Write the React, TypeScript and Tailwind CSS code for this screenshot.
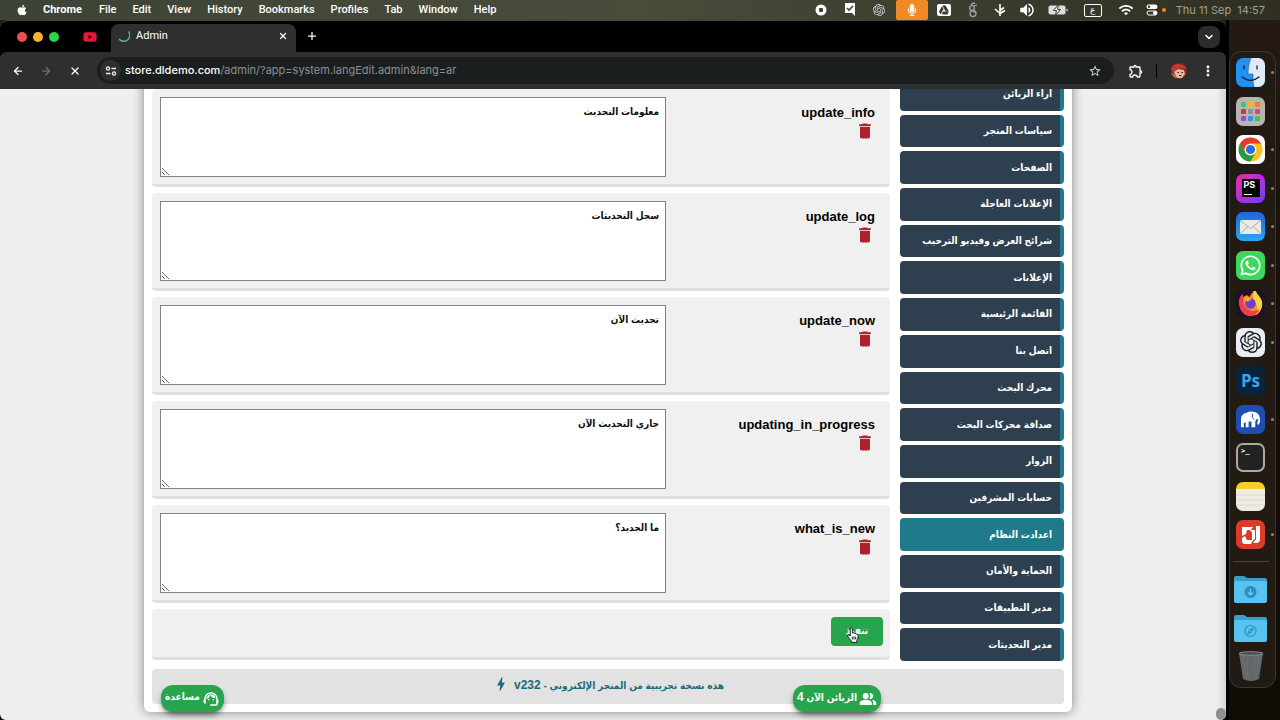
import { useState } from "react";
import type { ReactNode } from "react";
import { FaApple, FaYoutube, FaWhatsapp, FaMicrophone } from "react-icons/fa";
import { SiOpenai, SiGoogledrive } from "react-icons/si";
import {
  MdDelete,
  MdBolt,
  MdPeopleAlt,
  MdSupportAgent,
  MdWifi,
  MdVolumeUp,
  MdOutlineExtension,
  MdStarBorder,
} from "react-icons/md";
import {
  ArrowLeft,
  ArrowRight,
  ChevronDown,
  EllipsisVertical,
  Plus,
  X,
} from "lucide-react";

const menus = [
  "File",
  "Edit",
  "View",
  "History",
  "Bookmarks",
  "Profiles",
  "Tab",
  "Window",
  "Help",
];

const sections = [
  "اراء الزبائن",
  "سياسات المتجر",
  "الصفحات",
  "الإعلانات العاجلة",
  "شرائح العرض وفيديو الترحيب",
  "الإعلانات",
  "القائمة الرئيسية",
  "اتصل بنا",
  "محرك البحث",
  "صداقة محركات البحث",
  "الزوار",
  "حسابات المشرفين",
  "اعدادت النظام",
  "الحماية والأمان",
  "مدير التطبيقات",
  "مدير التحديثات",
];

const initialStrings = [
  { key: "update_info", value: "معلومات التحديث" },
  { key: "update_log", value: "سجل التحديثات" },
  { key: "update_now", value: "تحديث الآن" },
  { key: "updating_in_progress", value: "جاري التحديث الآن" },
  { key: "what_is_new", value: "ما الجديد؟" },
];

const MenuBar = () => (
  <header className="flex h-5 shrink-0 items-center bg-linear-to-r from-[#3c4437] via-[#4a4c3a] to-[#2f2f22] pr-[15px] pl-4 text-[11px] text-white">
    <FaApple className="mr-[15px] size-3" />
    <nav className="flex items-center gap-4 font-[Roboto,sans-serif] font-medium">
      <button className="pr-px font-bold">Chrome</button>
      {menus.map((menu) => (
        <button key={menu}>{menu}</button>
      ))}
    </nav>
    <div className="ml-auto flex items-center">
      <svg className="size-3" viewBox="0 0 12 12">
        <circle cx="6" cy="6" r="5.5" fill="#fff" />
        <rect x="4" y="4" width="4" height="4" rx="1" fill="#3f4234" />
      </svg>
      <svg className="ml-4 size-3.5" viewBox="0 0 14 14">
        <path d="M2 0h10v13l-3-3H2z" fill="#fff" />
        <path d="M4 5l2 2 4-4" stroke="#3f4234" strokeWidth="1.6" fill="none" />
      </svg>
      <SiOpenai className="ml-4 size-3 text-gray-300" />
      <span className="ml-[11px] flex h-5 w-8 items-center justify-center rounded-xs bg-[#f08a24]">
        <FaMicrophone className="size-3" />
      </span>
      <span className="ml-[9px] flex h-3 w-3.5 items-center justify-center rounded-xs bg-white text-[#3a3c2d]">
        <SiGoogledrive className="size-2.5" />
      </span>
      <svg
        className="ml-[16px] h-4 w-3 text-gray-400"
        viewBox="0 0 12 16"
        fill="none"
        stroke="currentColor"
        strokeWidth="1.3"
      >
        <circle cx="5" cy="6" r="2.4" />
        <circle cx="6" cy="11.500" r="3" />
        <path d="M4 3q1-2 4-2M7 4l3-1M5 8.500l3 2" />
      </svg>
      <svg
        className="ml-[15px] h-3.5 w-3"
        viewBox="0 0 12 14"
        fill="none"
        stroke="#fff"
        strokeWidth="1.6"
      >
        <path d="M6 1v12M6 7.500l4-3M6 10.500l5-3M6 10.500L1 6" />
      </svg>
      <MdVolumeUp className="ml-[12px] size-[18px]" />
      <svg className="ml-[12px] h-3 w-5" viewBox="0 0 20 12">
        <rect x=".5" y="1.500" width="17" height="9" rx="2" fill="#ddd" />
        <path d="M18.500 4.500v3q1.300-.5 1.300-1.500t-1.300-1.500z" fill="#ddd" />
        <path d="M10.500.5L5.500 6.500h3l-1 5 5-6h-3z" fill="#fff" stroke="#3a3b2b" />
      </svg>
      <span className="ml-4 flex h-[13px] w-[18px] items-center justify-center rounded-xs border border-white font-['DejaVu_Sans',sans-serif] text-[9px] leading-none">
        ع
      </span>
      <MdWifi className="ml-4 size-4" />
      <svg className="ml-3 h-3 w-3" viewBox="0 0 12 12" fill="none">
        <rect x=".5" y=".5" width="11" height="4.500" rx="2.250" fill="#fff" />
        <circle cx="3" cy="2.750" r="1.200" fill="#333" />
        <rect x="1" y="7" width="10" height="4" rx="2" stroke="#fff" />
        <circle cx="9" cy="9" r="2" fill="#fff" />
      </svg>
      <span className="ml-1 size-1 rounded-full bg-[#f08a24]" />
      <span className="ml-2.5 whitespace-pre text-[#a0a196]">
        Thu 11 Sep  14:57
      </span>
    </div>
  </header>
);

const BrowserBar = () => (
  <div className="shrink-0 overflow-hidden rounded-t-lg border-t border-[#444] bg-black text-white">
    {/* Tabs */}
    <div className="flex h-[31px] items-center pr-1.5 pl-[17px]">
      <div className="flex gap-1.5">
        <span className="size-2.5 rounded-full bg-[#ee4d52]" />
        <span className="size-2.5 rounded-full bg-[#f6b42d]" />
        <span className="size-2.5 rounded-full bg-[#2fd24a]" />
      </div>
      <div className="ml-6 flex h-3 w-3.5 items-center justify-center">
        <FaYoutube className="size-3.5 text-[#e8173a]" />
      </div>
      <div className="mt-[3px] ml-3.5 flex h-7 w-[185px] items-center rounded-t-lg bg-[#2f2f2f] pr-2 pb-1 pl-[7px] text-[11px]">
        <svg className="size-3" viewBox="0 0 12 12" fill="none">
          <path
            d="M10.500 1.500A5.500 5.500 0 0 1 1 9"
            stroke="#5fb3a8"
            strokeWidth="1.400"
          />
        </svg>
        <span className="ml-1.5 font-[Roboto,sans-serif]">Admin</span>
        <button aria-label="Close tab" className="ml-auto">
          <X className="size-2.5" strokeWidth={3} />
        </button>
      </div>
      <button aria-label="New tab" className="ml-2.5 pb-0.5">
        <Plus className="size-3" strokeWidth={2.5} />
      </button>
      <button
        aria-label="Search tabs"
        className="ml-auto flex size-[22px] items-center justify-center rounded-lg bg-[#2c2c2c]"
      >
        <ChevronDown className="size-3" strokeWidth={3} />
      </button>
    </div>

    {/* Address bar */}
    <div className="flex h-[37px] items-center rounded-t-md bg-[#2f2f2f] pr-[11px] pl-3">
      <button aria-label="Back">
        <ArrowLeft className="size-3" strokeWidth={2.5} />
      </button>
      <button aria-label="Forward" className="ml-4 text-gray-500">
        <ArrowRight className="size-3" strokeWidth={2.5} />
      </button>
      <button aria-label="Stop" className="ml-[17px]">
        <X className="size-3" strokeWidth={2.5} />
      </button>
      <div className="ml-4 flex h-[27px] flex-1 items-center rounded-full bg-[#1b1e1f] pr-3 pl-[3px]">
        <span className="flex size-[21px] items-center justify-center rounded-full bg-[#2f2f2f]">
          <svg
            className="size-3"
            viewBox="0 0 12 12"
            fill="none"
            stroke="#eee"
            strokeWidth="1.300"
          >
            <circle cx="3" cy="3.500" r="1.600" />
            <path d="M6.500 3.500H11M1 8.500h4.500" />
            <circle cx="9" cy="8.500" r="1.600" />
          </svg>
        </span>
        <span className="ml-1 text-[11px] text-[#8d9092]">
          <span className="font-medium text-white">store.dldemo.com</span>
          /admin/?app=system.langEdit.admin&lang=ar
        </span>
        <button aria-label="Bookmark this page" className="ml-auto">
          <MdStarBorder className="size-3.5 text-gray-300" />
        </button>
      </div>
      <button aria-label="Extensions" className="ml-3.5">
        <MdOutlineExtension className="size-4" />
      </button>
      <span className="ml-3 h-3.5 w-px bg-black" />
      <button aria-label="Profile" className="ml-3.5">
        <svg className="size-4 rounded-full" viewBox="0 0 16 16">
          <rect width="16" height="16" fill="#7a2c26" />
          <path d="M0 6q1-5 7-5 7 0 9 6l-4-2-6 1-3 4z" fill="#c8362f" />
          <path d="M3 9l4-3 6 1 1 4-3 4H6z" fill="#e5b8a2" />
          <path d="M0 10l4 1 2 4H0z" fill="#b86a50" />
          <path d="M6.500 9.500h1.500M10.500 9.500H12M8 12.500h2.500" stroke="#4b1915" />
        </svg>
      </button>
      <button aria-label="Menu" className="ml-3.5">
        <EllipsisVertical className="size-3.5" strokeWidth={3} />
      </button>
    </div>
  </div>
);

const Sidebar = () => (
  <nav className="w-[164px] shrink-0">
    <ul className="flex h-[583px] flex-col gap-1">
      {sections.map((section) => (
        <li key={section} className="flex-1">
          <a
            href="#"
            className={`flex h-full items-center rounded border-r-4 border-[#1f7a8c] px-2 text-[10px] leading-4 whitespace-nowrap text-white ${
              section === "اعدادت النظام" ? "bg-[#1f7a8c]" : "bg-[#2e4050]"
            }`}
          >
            {section}
          </a>
        </li>
      ))}
    </ul>
  </nav>
);

const StringsForm = () => {
  const [strings, setStrings] = useState(initialStrings);

  const handleChange = (key: string, value: string) => {
    setStrings((prev) =>
      prev.map((item) => (item.key === key ? { ...item, value } : item))
    );
  };

  const handleDelete = (key: string) => {
    setStrings((prev) => prev.filter((item) => item.key !== key));
  };

  return (
    <form
      className="flex min-w-0 flex-1 flex-col justify-end gap-1.5 pb-px"
      onSubmit={(e) => e.preventDefault()}
    >
      {strings.map((item) => (
        <div
          key={item.key}
          className="flex rounded border-b-3 border-[#e0e0e0] bg-[#f0f0f0] pt-2 pr-[15px] pb-[7px] pl-2"
        >
          <div className="w-[209px] shrink-0 pt-1.5">
            <label
              htmlFor={item.key}
              className="block text-[13px] leading-5 text-black"
            >
              {item.key}
            </label>
            <button
              type="button"
              aria-label={`حذف ${item.key}`}
              className="block text-[#b0202b]"
              onClick={() => handleDelete(item.key)}
            >
              <MdDelete className="-mt-0.5 size-5" />
            </button>
          </div>
          <textarea
            id={item.key}
            value={item.value}
            onChange={(e) => handleChange(item.key, e.target.value)}
            className="h-20 min-w-0 flex-1 border border-[#7b8588] bg-white px-1.5 py-1 text-[10px] leading-5 text-[#111] outline-none"
          />
        </div>
      ))}
      <div className="flex h-[51px] items-start rounded border-b-3 border-[#e0e0e0] bg-[#f0f0f0] px-[7px] pt-2">
        <button className="relative h-[29px] w-[52px] rounded bg-[#27a44c] pb-0.5 text-[10px] text-white">
          تنفيذ
          <svg
            className="absolute top-2.5 left-4 h-4 w-3"
            viewBox="0 0 12 16"
            fill="#fff"
            stroke="#111"
            strokeWidth=".9"
          >
            <path d="M3.200 9V2q0-1.300 1.100-1.300T5.400 2v4q2-.8 2.200.6 1.700-.6 1.900.7 1.700-.3 1.700 1.500 0 3-1.400 4.700V15.300H4.200V13.800Q2.500 12 .9 9.500.2 8 1.400 7.900T3.200 9z" />
            <path d="M5.300 9.500v3M7 9.500v3M8.700 9.500v3" />
          </svg>
        </button>
      </div>
    </form>
  );
};

const AdminPage = () => (
  <div className="flex min-h-0 flex-1 overflow-hidden rounded-b-md bg-[#efefef]">
    <main
      dir="rtl"
      className="relative flex min-w-0 flex-1 flex-col justify-end px-6 pb-2 font-['Liberation_Sans','DejaVu_Sans_Condensed','DejaVu_Sans',sans-serif] font-bold"
    >
      <div className="mx-auto w-full max-w-[928px] rounded-md bg-white p-2 shadow-[0_0_12px_rgba(0,0,0,0.45)]">
        <div className="flex items-end gap-2.5">
          <Sidebar />
          <StringsForm />
        </div>
        <footer className="mt-2 flex h-[35px] justify-center rounded bg-[#e2e2e2] pt-1.5 text-[10px] leading-5 text-[#1c6b7c]">
          <span>
            هذه نسخة تجريبية من المتجر الإلكتروني -{" "}
            <span className="text-xs leading-5">v232</span>
          </span>
          <MdBolt className="mr-1 size-[18px]" />
        </footer>
      </div>

      {/* Floating actions */}
      <div className="pointer-events-none absolute inset-x-6 bottom-2 mx-auto flex max-w-[928px] justify-between pr-[191px] pl-[17px] text-[10px] text-white">
        <button className="pointer-events-auto flex h-[27px] items-center gap-0.5 rounded-xl bg-[#27a44c] px-1 shadow-md shadow-black/40">
          <MdPeopleAlt className="size-[18px]" />
          <span className="pb-1">
            الزبائن الآن <span className="text-xs">4</span>
          </span>
        </button>
        <button className="pointer-events-auto flex h-[27px] items-center gap-0.5 rounded-xl bg-[#27a44c] px-1 shadow-md shadow-black/40">
          <MdSupportAgent className="size-[18px]" />
          <span className="pb-1">مساعدة</span>
        </button>
      </div>
    </main>
    <div className="flex w-2.5 flex-col justify-end bg-linear-to-r from-[#efefef] to-[#d4d4d4]">
      <span className="h-3 rounded-full bg-[#8f8f8f]" />
    </div>
  </div>
);

const DockApp = ({
  label,
  className = "",
  running = false,
  children,
}: {
  label: string;
  className?: string;
  running?: boolean;
  children: ReactNode;
}) => (
  <li className="relative">
    <button
      aria-label={label}
      className={`flex size-[29px] items-center justify-center overflow-hidden rounded-[7px] ${className}`}
    >
      {children}
    </button>
    {running && (
      <span className="absolute top-[13px] -right-[9px] size-[3px] rounded-full bg-[#8a857e]" />
    )}
  </li>
);

const launchpadColors = [
  "#4ac25a",
  "#f2b632",
  "#ef7d2c",
  "#d92f3a",
  "#8d9297",
  "#ed3d70",
  "#a04bd8",
  "#3c8df0",
  "#43c156",
];

const Folder = ({ children }: { children: ReactNode }) => (
  <svg className="h-[29px] w-[33px]" viewBox="0 0 33 29">
    <path d="M0 3q0-2 2-2h8l3 2h18q2 0 2 2v8H0z" fill="#3a9fc8" />
    <rect y="6" width="33" height="22" rx="2" fill="#57c3f0" />
    <g stroke="#2f8fbd" fill="none" strokeWidth="1.200">
      {children}
    </g>
  </svg>
);

const Dock = () => (
  <div className="mt-[31px] flex h-[637px] w-[47px] flex-col items-center rounded-xl border border-[#3b3833] bg-[#211b14] pt-1.5 pr-1">
    <ul className="flex h-[491px] flex-col justify-between">
      <DockApp label="Finder" running>
        <svg viewBox="0 0 29 29">
          <rect width="29" height="29" fill="#2391f2" />
          <path d="M15 0q-3 7-3 16h5q-.5 7 1 13h11V0z" fill="#dcebf7" />
          <path d="M15 0q-3 7-3 16h5q-.5 7 1 13" stroke="#1d5d9d" fill="none" strokeWidth=".6" />
          <path d="M8 8v3M21 8v3M6 19q8.500 7 17 0" stroke="#123" strokeWidth="1.300" fill="none" strokeLinecap="round" />
        </svg>
      </DockApp>
      <DockApp label="Launchpad" className="bg-[#b5b5b4]">
        <span className="grid grid-cols-3 gap-0.5">
          {launchpadColors.map((color) => (
            <span
              key={color}
              className="size-[5px] rounded-[1px]"
              style={{ backgroundColor: color }}
            />
          ))}
        </span>
      </DockApp>
      <DockApp label="Chrome" className="bg-white" running>
        <svg className="size-[25px]" viewBox="0 0 24 24">
          <circle cx="12" cy="12" r="11.500" fill="#fbc116" />
          <path d="M2 6.300A11.500 11.500 0 0 1 22 6.300H12A5.700 5.700 0 0 0 7 14.800z" fill="#e33b2e" />
          <path d="M2 6.300A11.500 11.500 0 0 0 12 23.500l5-8.700a5.700 5.700 0 0 1-10 0z" fill="#269a4b" />
          <circle cx="12" cy="12" r="5.600" fill="#fff" />
          <circle cx="12" cy="12" r="4.400" fill="#2c6fdc" />
        </svg>
      </DockApp>
      <DockApp
        label="PhpStorm"
        className="bg-linear-to-br from-[#e3258f] via-[#b12de0] to-[#6b3df0]"
        running
      >
        <span className="flex size-[18px] flex-col bg-black pt-px pl-0.5 text-left text-[9px] leading-[10px] font-bold text-white">
          PS
          <span className="mt-1 h-px w-2 bg-white" />
        </span>
      </DockApp>
      <DockApp
        label="Mail"
        className="bg-linear-to-b from-[#2364dc] to-[#2ba5f2]"
        running
      >
        <svg className="h-3.5 w-[21px]" viewBox="0 0 21 14">
          <rect width="21" height="14" rx="1.500" fill="#eceae6" />
          <path d="M1 1l9.500 7.500L20 1M1 13l7-6.500M20 13l-7-6.500" stroke="#aaa" fill="none" />
        </svg>
      </DockApp>
      <DockApp label="WhatsApp" className="bg-[#3fd75b] text-white" running>
        <FaWhatsapp className="size-[23px]" />
      </DockApp>
      <DockApp label="Firefox" className="bg-[#1d1226]" running>
        <svg className="size-[27px]" viewBox="0 0 26 26">
          <path d="M2 12q0-5 3-8l1 3q2-2 4-2l2 2q2-5 6-6 1 3 4 6 3 4 2 9-2 9-11 9Q3 24 2 12z" fill="#fb8a2c" />
          <path d="M18 1q1 3 4 6 3 4 2 9-1 5-6 8 3-7-1-13-3-3-1-10z" fill="#fdd33c" />
          <path d="M2 12q0-5 3-8l1 3q-1 10 7 13 6 1 9-2-3 7-10 7Q3 24 2 12z" fill="#ef3b51" />
          <circle cx="13" cy="13" r="5" fill="#6f3fd0" />
          <path d="M7 8q4-2 7 1l-3 2q-3 0-4-3z" fill="#fdae34" />
        </svg>
      </DockApp>
      <DockApp label="ChatGPT" className="bg-[#e9eef4] text-[#222]" running>
        <SiOpenai className="size-[22px]" />
      </DockApp>
      <DockApp label="Photoshop" className="bg-[#07243a]">
        <span className="font-['Open_Sans',sans-serif] text-[17px] leading-none font-bold text-[#3da2f5]">
          Ps
        </span>
      </DockApp>
      <DockApp label="MAMP" className="bg-[#1e4db4]" running>
        <svg className="size-[21px]" viewBox="0 0 22 20">
          <path d="M1 18V10q0-6 6-7 3-2 7-1 7 1 7 8v3l-2 3-1-2 1-4q-1-1-2 0l-1 2v6h-4v-6H9v6H6v-5l-2 1v4z" fill="#fff" />
          <path d="M13 4q-1 5 2 6" stroke="#1e4db4" fill="none" />
        </svg>
      </DockApp>
      <DockApp
        label="Terminal"
        className="items-start justify-start border-2 border-[#aaa9a6] bg-[#222] p-[3px]"
      >
        <span className="font-['DejaVu_Sans_Mono',monospace] text-[7px] leading-none font-bold text-white">
          &gt;_
        </span>
      </DockApp>
      <DockApp
        label="Notes"
        className="bg-linear-to-b from-[#fbcb2d] from-25% to-[#eeebe3] to-25%"
      >
        <svg viewBox="0 0 29 29" stroke="#d8d6ce" strokeWidth=".8">
          <path d="M0 13h29M0 18h29M0 23h29" />
        </svg>
      </DockApp>
      <DockApp label="Zoho" className="bg-[#db3b2a]" running>
        <svg className="size-5" viewBox="0 0 20 20" fill="#fff">
          <path d="M1 2h11l-2 3H6l-1 4-4 2z" />
          <path d="M1 13l3-2 2 4h6l-2 4H4q-3 0-3-3z" />
          <path d="M9 5h5v9l-3 2V8z" />
          <path d="M15 1h4v13q0 4-4 4h-3l2-3h1z" />
        </svg>
      </DockApp>
    </ul>
    <hr className="mt-3 w-9 border-[#4a453e]" />
    <ul className="mt-[13px] flex flex-col items-center gap-2.5">
      <li className="h-[29px]">
        <Folder>
          <circle cx="16.500" cy="17" r="5.500" fill="#2f8fbd" />
          <path d="M16.500 14v6M14 17.500l2.500 2.500 2.500-2.500" stroke="#6fd0f5" />
        </Folder>
      </li>
      <li className="h-[29px]">
        <Folder>
          <circle cx="16.500" cy="17" r="5.500" />
          <path d="M19 14.500l-1.500 3.500-3.500 1.500 1.500-3.500z" />
        </Folder>
      </li>
      <li className="-mt-0.5">
        <svg className="h-[31px] w-[26px]" viewBox="0 0 26 31">
          <path d="M1 2l4 26q8 4 16 0l4-26z" fill="#63686b" />
          <path d="M5 5l3 22M9 5l1 23M17 5l-1 23M21 5l-3 22" stroke="#6b7073" />
          <ellipse cx="13" cy="2.500" rx="12" ry="1.800" fill="#4a4e50" stroke="#868b8e" />
        </svg>
      </li>
    </ul>
  </div>
);

const App = () => (
  <div className="flex h-screen flex-col overflow-hidden bg-black font-[Inter,sans-serif]">
    <MenuBar />
    <div className="flex min-h-0 flex-1 bg-linear-to-b from-[#241a13] via-[#150d09] to-[#100c06]">
      <section className="flex min-w-0 flex-1 flex-col">
        <BrowserBar />
        <AdminPage />
      </section>
      <aside className="w-[54px] shrink-0 border-l-3 border-black">
        <Dock />
      </aside>
    </div>
  </div>
);

export default App;
